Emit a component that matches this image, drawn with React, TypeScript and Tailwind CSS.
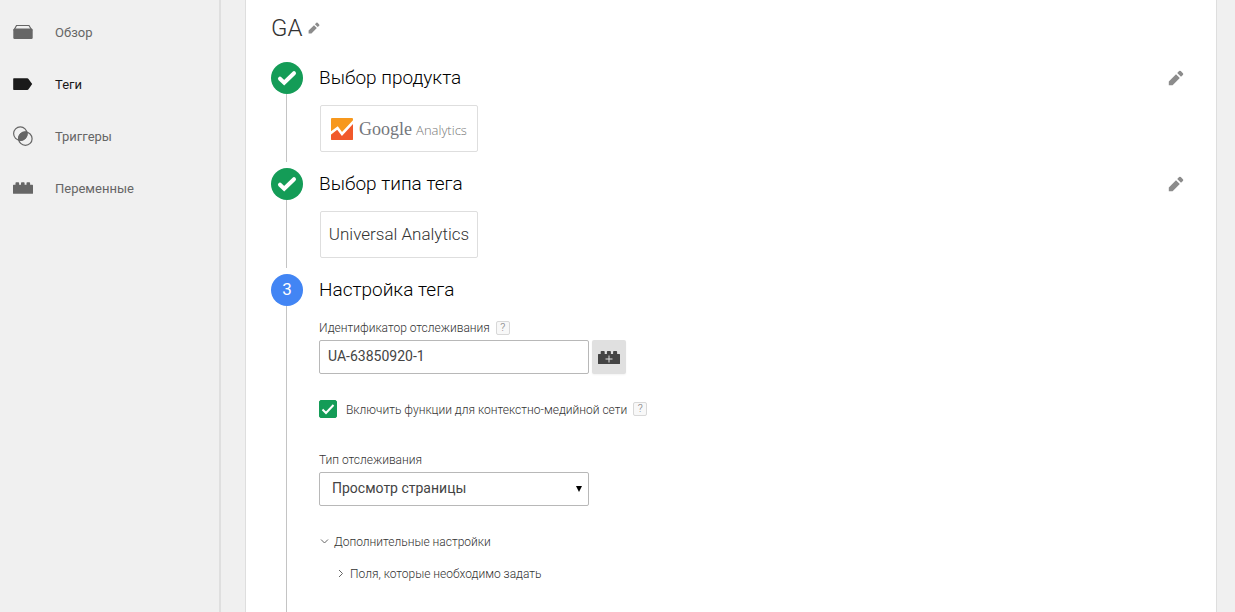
import { useState, type ReactNode } from 'react'

const navItems = [
  { id: 'overview', label: 'Обзор', icon: <OverviewIcon /> },
  { id: 'tags', label: 'Теги', icon: <TagIcon /> },
  { id: 'triggers', label: 'Триггеры', icon: <TriggerIcon /> },
  { id: 'variables', label: 'Переменные', icon: <BrickIcon /> },
]

function OverviewIcon() {
  return (
    <svg width="20" height="20" viewBox="0 0 20 20" fill="currentColor">
      <path d="M.8 8.500 3.500 3.500h12.500L19 8.500" fill="none" stroke="currentColor" strokeWidth="1.200" />
      <path d="M1.500 6.500h17a1.500 1.500 0 0 1 1.200 1.200v8.100a1.200 1.200 0 0 1-1.200 1.200h-17A1.200 1.200 0 0 1 .3 15.800V7.700a1.500 1.500 0 0 1 1.200-1.200z" />
    </svg>
  )
}

function TagIcon() {
  return (
    <svg width="20" height="20" viewBox="0 0 20 20" fill="currentColor">
      <path d="M.8 4.300h13.500a1.500 1.500 0 0 1 1.200.6L19.200 10l-3.700 5.300a1.500 1.500 0 0 1-1.200.6H.8a.6.600 0 0 1-.6-.6V4.900a.6.600 0 0 1 .6-.6z" />
    </svg>
  )
}

function TriggerIcon() {
  return (
    <svg width="20" height="20" viewBox="0 0 20 20" fill="none" stroke="currentColor" strokeWidth="1.200">
      <circle cx="7.300" cy="7.600" r="6.700" />
      <circle cx="12.400" cy="12.700" r="6.700" />
      <path d="M13.900 6.100A6.700 6.700 0 0 0 5.800 14.200 6.700 6.700 0 0 0 13.900 6.100z" fill="currentColor" />
    </svg>
  )
}

function BrickIcon() {
  return (
    <svg width="20" height="20" viewBox="0 0 20 20" fill="currentColor">
      <path d="M.6 6.800h1.900V5q0-.8.800-.8h2q.8 0 .8.800v1.800h1.900V5q0-.8.800-.8h2q.8 0 .8.800v1.800h1.900V5q0-.8.800-.8h2q.8 0 .8.800v1.800h2.300q.6 0 .6.600v7.800q0 .600-.6.600H.6q-.6 0-.6-.6V7.400q0-.6.600-.6z" />
    </svg>
  )
}

function AddVariableIcon() {
  return (
    <svg width="22" height="16" viewBox="0 0 22 16">
      <path
        d="M.6 5h2.100V2.800q0-.8.800-.8h2.400q.8 0 .8.800V5h2.200V2.800q0-.8.800-.8h2.400q.8 0 .8.800V5h2.200V2.800q0-.8.800-.8h2.400q.8 0 .8.800V5h2.300q.6 0 .6.600v8.800q0 .600-.6.600H.6q-.6 0-.6-.6V5.600Q0 5 .6 5z"
        fill="#444"
      />
      <path d="M11 6.500v7M7.500 10h7" stroke="#e0e0e0" fill="none" />
    </svg>
  )
}

function PencilIcon({ size }: { size: number }) {
  return (
    <svg width={size} height={size} viewBox="0 0 16 16" fill="currentColor">
      <path d="M.8 11.400v3.800h3.800l7.200-7.200L8 4.200zM9.200 3l3.800 3.800 1.900-1.900a1.200 1.200 0 0 0 0-1.700l-2.100-2.100a1.200 1.200 0 0 0-1.700 0z" />
    </svg>
  )
}

function CheckIcon() {
  return (
    <svg width="20" height="16" viewBox="0 0 20 16" fill="none" stroke="white" strokeWidth="4" strokeLinecap="round">
      <path d="M3 8.700 7.200 12.700 17 3.200" />
    </svg>
  )
}

function AnalyticsLogo() {
  return (
    <svg width="22" height="22" viewBox="0 0 22 22">
      <rect width="22" height="22" rx="1" fill="#f7981d" />
      <path d="M0 17 7 10.500 11.500 14.500 22 4V21a1 1 0 0 1-1 1H1a1 1 0 0 1-1-1z" fill="#f1592a" />
      <path d="M-1 15.500 6.500 10 11 16 23 3" fill="none" stroke="white" strokeWidth="2.600" />
    </svg>
  )
}

function Help() {
  return (
    <button
      type="button"
      aria-label="Справка"
      className="flex h-3.5 w-3.5 items-center justify-center rounded-xs border border-[#d8d8d8] bg-[#f8f8f8] text-[11px] leading-3 text-[#777]"
    >
      ?
    </button>
  )
}

function Sidebar() {
  const [active, setActive] = useState('tags')

  return (
    <nav className="w-[221px] shrink-0 border-r-2 border-[#dfdfdf] pt-1.5">
      {navItems.map(item => (
        <a
          key={item.id}
          href={`#${item.id}`}
          onClick={() => setActive(item.id)}
          className={`flex h-13 items-center gap-[22px] pl-[13px] text-[13px] ${
            active === item.id ? 'text-[#1a1a1a]' : 'text-[#666]'
          }`}
        >
          {item.icon}
          <span className="pt-0.5">{item.label}</span>
        </a>
      ))}
    </nav>
  )
}

interface StepProps {
  number: number
  title: string
  done?: boolean
  children: ReactNode
}

function Step({ number, title, done, children }: StepProps) {
  return (
    <li className="flex gap-4 pb-1.5 last:grow last:pb-0">
      <div className="flex w-8 shrink-0 flex-col items-center">
        <div
          className={`flex h-8 w-8 items-center justify-center rounded-full text-[17px] text-white ${
            done ? 'bg-[#149c57]' : 'bg-[#4285f4]'
          }`}
        >
          {done ? <CheckIcon /> : number}
        </div>
        <div className="mr-px w-px grow bg-[#c4c4c4]" />
      </div>
      <div className="grow pb-2.5">
        <div className="flex h-8 items-center justify-between">
          <h2 className="text-[19px] font-light text-black">{title}</h2>
          {done && (
            <button type="button" aria-label={`Изменить: ${title}`} className="text-[#8c8c8c]">
              <PencilIcon size={16} />
            </button>
          )}
        </div>
        {children}
      </div>
    </li>
  )
}

function ChoiceCard({ children }: { children: ReactNode }) {
  return (
    <div className="mt-[11px] ml-px flex h-[47px] w-[158px] items-center justify-center rounded-xs border border-[#dedede]">
      {children}
    </div>
  )
}

function TagSettings() {
  const [trackingId, setTrackingId] = useState('UA-63850920-1')
  const [display, setDisplay] = useState(true)

  return (
    <form className="pt-3.5 text-[12px] leading-4 font-light text-[#333]">
      <div className="flex items-center gap-1.5">
        <label htmlFor="tracking-id">Идентификатор отслеживания</label>
        <Help />
      </div>
      <div className="mt-1 flex gap-[3px]">
        <input
          id="tracking-id"
          value={trackingId}
          onChange={e => setTrackingId(e.target.value)}
          className="h-[34px] w-[270px] rounded-xs border border-[#b8b8b8] px-2 pb-0.5 text-[14px] font-normal text-[#444]"
        />
        <button
          type="button"
          aria-label="Добавить переменную"
          className="flex h-[34px] w-[34px] items-center justify-center rounded-xs bg-[#e0e0e0] shadow-xs"
        >
          <AddVariableIcon />
        </button>
      </div>

      <div className="mt-[26px] flex items-center">
        <span className="relative flex h-[18px] w-[18px]">
          <input
            id="display-features"
            type="checkbox"
            checked={display}
            onChange={e => setDisplay(e.target.checked)}
            className="peer h-[18px] w-[18px] appearance-none rounded-xs border border-[#b8b8b8] checked:border-[#149c57] checked:bg-[#149c57]"
          />
          <svg
            viewBox="0 0 18 18"
            className="pointer-events-none absolute inset-0 hidden peer-checked:block"
            fill="none"
            stroke="white"
            strokeWidth="2"
          >
            <path d="M3.500 9.500 7 13 14.500 5" />
          </svg>
        </span>
        <label htmlFor="display-features" className="mr-1.5 ml-[9px] pt-0.5">
          Включить функции для контекстно-медийной сети
        </label>
        <Help />
      </div>

      <label htmlFor="track-type" className="mt-[34px] block">Тип отслеживания</label>
      <div className="relative mt-1 w-[270px]">
        <select
          id="track-type"
          className="h-[34px] w-full appearance-none rounded-xs border border-[#b8b8b8] bg-white px-3 pb-0.5 text-[14px] font-normal text-[#444]"
        >
          <option>Просмотр страницы</option>
          <option>Событие</option>
        </select>
        <svg width="6" height="6" viewBox="0 0 6 6" className="pointer-events-none absolute top-3.5 right-[7px]">
          <path d="M0 0h6L3 6z" />
        </svg>
      </div>

      <button type="button" aria-expanded="true" className="mt-7 ml-px flex items-center gap-[5px]">
        <svg width="9" height="9" viewBox="0 0 9 9" fill="none" stroke="#666">
          <path d="M1 1.500 4.500 5 8 1.500" />
        </svg>
        Дополнительные настройки
      </button>
      <button type="button" aria-expanded="false" className="mt-4 ml-4 flex items-center gap-1.5">
        <svg width="9" height="9" viewBox="0 0 9 9" fill="none" stroke="#666">
          <path d="M4 0 7.500 3.500 4 7" />
        </svg>
        Поля, которые необходимо задать
      </button>
    </form>
  )
}

export default function App() {
  return (
    <div className="flex min-h-screen bg-[#f0f0f0] font-[Roboto,'Noto_Sans',sans-serif]">
      <Sidebar />
      <main className="mr-[18px] ml-6 flex grow flex-col border-x border-[#dedede] bg-white pr-8 pl-[25px]">
        <div className="flex h-[62px] items-center gap-1.5 pb-1.5">
          <h1 className="text-[24px] font-light text-[#333]">GA</h1>
          <button type="button" aria-label="Переименовать" className="text-[#8c8c8c]">
            <PencilIcon size={12} />
          </button>
        </div>
        <ol className="flex grow flex-col">
          <Step number={1} title="Выбор продукта" done>
            <ChoiceCard>
              <AnalyticsLogo />
              <div className="ml-1.5 flex items-baseline gap-1 pt-0.5">
                <span className="font-['Liberation_Serif',serif] text-[18px] text-[#75777c]">Google</span>
                <span className="font-['Open_Sans',sans-serif] text-[13px] font-light text-[#777]">Analytics</span>
              </div>
            </ChoiceCard>
          </Step>
          <Step number={2} title="Выбор типа тега" done>
            <ChoiceCard>
              <span className="text-[17px] font-light text-[#333]">Universal Analytics</span>
            </ChoiceCard>
          </Step>
          <Step number={3} title="Настройка тега">
            <TagSettings />
          </Step>
        </ol>
      </main>
    </div>
  )
}
